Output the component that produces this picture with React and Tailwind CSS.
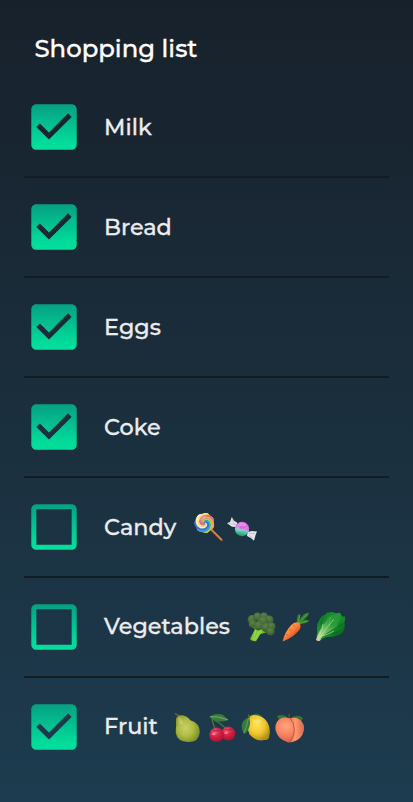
import React from "react";

const SWIRL = ["#f4e04d", "#e8659b", "#f7a05a", "#a5d84a", "#3f9fe8", "#3f72e0", "#f6eec0"];

function arm(index) {
  const step = (Math.PI * 2) / SWIRL.length;
  const edge = (offset) =>
    Array.from({ length: 19 }, (_, i) => {
      const r = (i / 18) * 10.6;
      const a = offset + (r / 10.6) * 5;
      return [11.5 + r * Math.cos(a), 11 + r * Math.sin(a)];
    });
  const points = [...edge(index * step), ...edge((index + 1.15) * step).reverse()];
  return "M" + points.map(([x, y]) => `${x.toFixed(2)} ${y.toFixed(2)}`).join("L") + "Z";
}

function Emoji({ children, label }) {
  return (
    <svg viewBox="0 0 30 31" className="h-[31px] w-[30px] shrink-0 overflow-visible" role="img" aria-label={label}>
      {children}
    </svg>
  );
}

function Lollipop() {
  return (
    <Emoji label="lollipop">
      <path d="M18 17.5L28.6 28" stroke="#a9552d" strokeWidth="2.4" strokeLinecap="round" />
      <path d="M18 17L28.4 27.5" stroke="#e38a4c" strokeWidth="1.2" strokeLinecap="round" />
      <clipPath id="disc"><circle cx="11.5" cy="11" r="10.4" /></clipPath>
      <g clipPath="url(#disc)">
        {SWIRL.map((color, i) => <path key={i} d={arm(i)} fill={color} />)}
        <ellipse cx="8" cy="5" rx="6" ry="3" fill="#fff" opacity=".22" transform="rotate(-30 8 5)" />
      </g>
    </Emoji>
  );
}

function Candy() {
  return (
    <Emoji label="candy">
      <defs>
        <linearGradient id="sweet" x1=".6" y1="0" x2=".35" y2="1">
          <stop offset="0" stopColor="#ee62e4" /><stop offset=".42" stopColor="#d56bdd" />
          <stop offset=".55" stopColor="#9bb9dc" /><stop offset=".68" stopColor="#45cba0" /><stop offset="1" stopColor="#23975e" />
        </linearGradient>
      </defs>
      <path d="M9 15L5 14.8 0 11.2 3 10 4.8 5 7 8.7 10 10.5 10.5 13Z" fill="#e5e4ea" />
      <path d="M1 11L8 12.5M5 6L7 11.5 10 13" stroke="#b9bcc6" strokeWidth=".7" fill="none" />
      <path d="M20.5 20L25 19 30 19.5 28.6 23 27 28.8 23.8 26 20 24Z" fill="#e5e4ea" />
      <path d="M22 21.5L28 21.5M22 23L26 26.5" stroke="#b6b9c4" strokeWidth=".7" />
      <circle cx="15" cy="17" r="7.2" fill="url(#sweet)" />
      <path d="M8.5 15.5Q12 10 15 10.3Q11.8 14.5 12 20Q9 19 8.5 15.5" fill="#d8c5ec" opacity=".4" />
      <path d="M12 19Q17 19 21.7 14" stroke="#f1d6f5" strokeWidth=".6" fill="none" opacity=".5" />
      <ellipse cx="16" cy="12.5" rx="3.4" ry="1.5" fill="#fff" opacity=".25" />
    </Emoji>
  );
}

function Broccoli() {
  const florets = [[5, 7.5, 4.4], [10.5, 4.8, 4.3], [17, 4.2, 3.8], [22, 8, 4.6], [16, 9, 5], [5.5, 12, 3.8], [11.5, 13.8, 4.6], [19, 15.5, 4.6], [24.5, 14.5, 4], [23.5, 19.5, 4.1]];
  return (
    <Emoji label="broccoli">
      <defs>
        <radialGradient id="floret" cx=".45" cy=".3" r=".72">
          <stop offset="0" stopColor="#5f8249" /><stop offset=".55" stopColor="#4a6d3d" /><stop offset="1" stopColor="#35542e" />
        </radialGradient>
        <linearGradient id="stem" x2="1"><stop stopColor="#78bd32" /><stop offset=".6" stopColor="#83d03a" /><stop offset="1" stopColor="#4e9727" /></linearGradient>
      </defs>
      <path d="M5 15L8 17 3 27Q5 29.7 9 29.3L13.5 22 21 20 18 14Z" fill="url(#stem)" />
      <path d="M9 18L6 28M13 18L8 28" stroke="#a8e45b" strokeWidth=".8" />
      {florets.map(([x, y, r], i) => <circle key={i} cx={x} cy={y} r={r} fill="url(#floret)" />)}
    </Emoji>
  );
}

function Carrot() {
  return (
    <Emoji label="carrot">
      <defs>
        <linearGradient id="carrot" x1=".2" y1=".2" x2=".7" y2=".75"><stop stopColor="#ffae63" /><stop offset=".5" stopColor="#fb823c" /><stop offset="1" stopColor="#d64f1c" /></linearGradient>
      </defs>
      <path d="M16 12Q15 5 18 1.5 20 4 18.5 8 23 0 28 .8 28 4 22.5 8 26 7 28.5 9 25 12 17.5 12Z" fill="#347d2e" />
      <path d="M16.5 12L19 3M17 12L26 2M17 12L26 9" stroke="#62ad49" strokeWidth=".8" />
      <path d="M1.7 29.6Q3 21 10 13.2Q14 9 18 10.8Q21 13 18.4 18Q12 25.5 1.7 29.6Z" fill="url(#carrot)" />
      <path d="M8 17L11 19M5 22L7 23.3M14 20L16 21M12 13L14 14.2M9 24L11 25" stroke="#cb541e" strokeWidth=".6" />
    </Emoji>
  );
}

function Lettuce() {
  return (
    <Emoji label="leafy green">
      <defs>
        <linearGradient id="leaf" x1=".1" y1=".1" x2=".9" y2=".9"><stop stopColor="#0d7328" /><stop offset=".4" stopColor="#1f9a36" /><stop offset=".7" stopColor="#118029" /><stop offset="1" stopColor="#055a18" /></linearGradient>
        <linearGradient id="rib" x1="0" y1="1" x2="1" y2="0"><stop stopColor="#dceabb" /><stop offset=".35" stopColor="#7cc065" /><stop offset=".65" stopColor="#2c9c3a" /><stop offset="1" stopColor="#249637" /></linearGradient>
      </defs>
      <path d="M1.4 25Q2.6 21 2 16.5Q1.4 12 4 8.5Q6.5 3 11 2.4Q10 .5 13.5 .4Q17-.6 21 1.2L25 .8Q26.6 3 27 4.6L30 4.4Q30.6 8 29.4 11Q30.6 15 28.8 18.5Q27 23 21.5 23.4Q17 25.6 12.5 24.7Q8 26 4.6 28.6Z" fill="url(#leaf)" />
      <path d="M1.8 26Q3 20 7 15.5Q10 11 13 6Q17 2 24 3Q26 7 23 11Q19 17 14 19.5Q10 22 7 25L4 28.6Z" fill="url(#rib)" />
      <path d="M3.4 26.5Q10 18 18.5 7.5M4 24Q7.5 18 8 12M6 24.5Q13 22.5 19 19" stroke="#c4e3a6" strokeWidth=".65" fill="none" />
      <path d="M13.5 14Q15 9 15 5M10.5 21Q17 17 22 13" stroke="#6fbd62" strokeWidth=".5" fill="none" />
      <path d="M5.5 13Q6 9 9 6M17 22L24 19.5M23.5 15L28 11.5" stroke="#054f18" strokeWidth="1" opacity=".55" fill="none" />
      <ellipse cx="3.4" cy="27.2" rx="2.2" ry="1.9" fill="#d9c9a0" />
    </Emoji>
  );
}

function Pear() {
  return (
    <Emoji label="pear">
      <defs>
        <radialGradient id="pear" cx=".42" cy=".48" r=".62"><stop stopColor="#c9d267" /><stop offset=".5" stopColor="#aebc43" /><stop offset="1" stopColor="#798b27" /></radialGradient>
      </defs>
      <path d="M7 6Q5 2.5 2.4 1.8" stroke="#835439" strokeWidth="1.4" fill="none" strokeLinecap="round" />
      <path d="M3 7Q4 2.5 9 3.3Q14 4 17.4 8.2Q26.8 11 26.8 20Q26.3 30.2 15 30Q4.2 29.6 2.8 21Q2.6 17 3.2 14Z" fill="url(#pear)" />
      <ellipse cx="7.5" cy="9" rx="2" ry="4" fill="#e1df91" opacity=".4" transform="rotate(-25 7.5 9)" />
    </Emoji>
  );
}

function Cherries() {
  return (
    <Emoji label="cherries">
      <defs>
        <radialGradient id="cherry" cx=".4" cy=".3" r=".7"><stop stopColor="#f56b7d" /><stop offset=".4" stopColor="#df2349" /><stop offset="1" stopColor="#a5142f" /></radialGradient>
      </defs>
      <path d="M5 7Q7 15 8.5 18M7 8Q14 11 20 18" stroke="#527542" strokeWidth="1.2" fill="none" />
      <path d="M2.5 4.5Q10 .5 16 3L21.5 8Q15 10.5 10 9Q5 8.5 2.5 4.5Z" fill="#397b38" />
      <path d="M3 4.7Q11 4 21 7.8" stroke="#8ab477" strokeWidth=".8" fill="none" />
      <circle cx="21.3" cy="21.6" r="7" fill="url(#cherry)" />
      <circle cx="9.6" cy="22.8" r="7.3" fill="url(#cherry)" />
      <path d="M6 18.6Q9 20 12 18.3M18 17.5Q21 19 24 17.6" stroke="#8e1c38" strokeWidth=".9" fill="none" />
      <ellipse cx="6.5" cy="22" rx="2" ry="1.2" fill="#ffafb5" opacity=".6" />
      <ellipse cx="19" cy="21" rx="1.8" ry="1" fill="#ffafb5" opacity=".55" />
    </Emoji>
  );
}

function Lemon() {
  return (
    <Emoji label="lemon">
      <defs>
        <radialGradient id="lemon" cx=".42" cy=".38" r=".65"><stop stopColor="#ffe55c" /><stop offset=".55" stopColor="#f0c72e" /><stop offset="1" stopColor="#b58c18" /></radialGradient>
      </defs>
      <path d="M9 5Q14-1 21 4L18 7 10 7Z" fill="#327437" />
      <path d="M8 6Q9 2 17 3.5Q26 6 28 14Q29.6 20 28.2 24Q28 28.4 23.5 28Q15 30 8.5 22.5Q5 15 8 6Z" fill="url(#lemon)" />
      <path d="M8.7 5.5L7.3 2.8" stroke="#756c39" strokeWidth="1.4" />
      <path d="M8 5Q10.5 11 7.5 17Q6 21 3 22Q-.3 16 1.2 11Q3 7 8 5Z" fill="#347b3c" />
      <path d="M7.5 6Q6 14 3 21" stroke="#76aa63" strokeWidth=".8" fill="none" />
      <ellipse cx="16" cy="9" rx="4" ry="2" fill="#fff5a0" opacity=".4" />
    </Emoji>
  );
}

function Peach() {
  return (
    <Emoji label="peach">
      <defs>
        <radialGradient id="peach" cx=".38" cy=".35" r=".7"><stop stopColor="#ffa57e" /><stop offset=".5" stopColor="#f78361" /><stop offset="1" stopColor="#d25a45" /></radialGradient>
        <linearGradient id="peachSide"><stop stopColor="#e4664b" /><stop offset=".4" stopColor="#ff9a70" /><stop offset="1" stopColor="#dd684f" /></linearGradient>
      </defs>
      <path d="M13 6Q9 1.5 2 4L4 8 13 9ZM16 6Q23 1.5 28 6L26 10 16 8Z" fill="#397434" />
      <path d="M14.5 7L14 2" stroke="#6a4a2c" strokeWidth="1.4" />
      <path d="M15 6.5Q8 4 3.5 8Q-.7 12 .8 19Q3 27 12 30Q15.3 31.2 18 29.8Q27 27 28.6 19Q30 12 25 8Q20 4.5 15 6.5Z" fill="url(#peach)" />
      <path d="M15 6.5Q20 4.5 25 8Q30 12 28.6 19Q27 27 18 29.8L14.5 30Q19.5 25 19.2 17Q19 10 15 6.5Z" fill="url(#peachSide)" />
      <path d="M15 6.5Q19 10 19.2 17Q19.5 25 14.5 30" stroke="#b84b38" strokeWidth=".8" fill="none" />
    </Emoji>
  );
}

function Checkbox({ checked }) {
  return (
    <svg viewBox="2.88 2.88 18.24 18.24" className="ml-[7px] h-[46px] w-[46px] shrink-0">
      <path
        fill="url(#mint)"
        d={checked
          ? "M19 3H5c-1.11 0-2 .9-2 2v14c0 1.1.89 2 2 2h14c1.11 0 2-.9 2-2V5c0-1.1-.89-2-2-2zm-9 14l-5-5 1.41-1.41L10 14.17l7.59-7.59L19 8l-9 9z"
          : "M19 5v14H5V5h14m0-2H5c-1.1 0-2 .9-2 2v14c0 1.1.9 2 2 2h14c1.1 0 2-.9 2-2V5c0-1.1-.9-2-2-2z"}
      />
    </svg>
  );
}

const items = [
  { name: "Milk", checked: true },
  { name: "Bread", checked: true },
  { name: "Eggs", checked: true },
  { name: "Coke", checked: true },
  { name: "Candy", box: "w-[89px]", icons: [Lollipop, Candy] },
  { name: "Vegetables", box: "w-[142.7px] pb-0.5", icons: [Broccoli, Carrot, Lettuce] },
  { name: "Fruit", checked: true, box: "w-[69.2px] pb-0.5", icons: [Pear, Cherries, Lemon, Peach] },
];

export default function App() {
  return (
    <main className="h-[802px] w-[413px] overflow-hidden bg-linear-to-b from-[#17212b] to-[#1d3c4f] px-6 font-['Montserrat','Inter',sans-serif] font-medium">
      <svg className="absolute h-0 w-0" aria-hidden="true">
        <linearGradient id="mint" x1="0" y1="3" x2="0" y2="21" gradientUnits="userSpaceOnUse">
          <stop stopColor="#06a083" /><stop offset=".85" stopColor="#02dc9a" /><stop offset="1" stopColor="#02df9b" />
        </linearGradient>
      </svg>
      <h1 className="flex h-[77.5px] items-center pt-[18.5px] pl-[10.5px] text-[24.35px] leading-none text-white [-webkit-text-stroke:0.35px_#fff]">Shopping list</h1>
      <ul className="w-[365px]">
        {items.map(({ name, checked, box = "w-[100px]", icons = [] }) => (
          <li key={name} className="flex h-[100px] items-center border-b-2 border-[#131c22] last:border-transparent">
            <Checkbox checked={checked} />
            <div className={`mt-0.5 ml-[27.1px] shrink-0 text-[22.35px] leading-none text-[#ececee] [-webkit-text-stroke:0.3px_#ececee] ${box}`}>{name}</div>
            <div className="mt-px flex gap-1">{icons.map((Icon, i) => <Icon key={i} />)}</div>
          </li>
        ))}
      </ul>
    </main>
  );
}
